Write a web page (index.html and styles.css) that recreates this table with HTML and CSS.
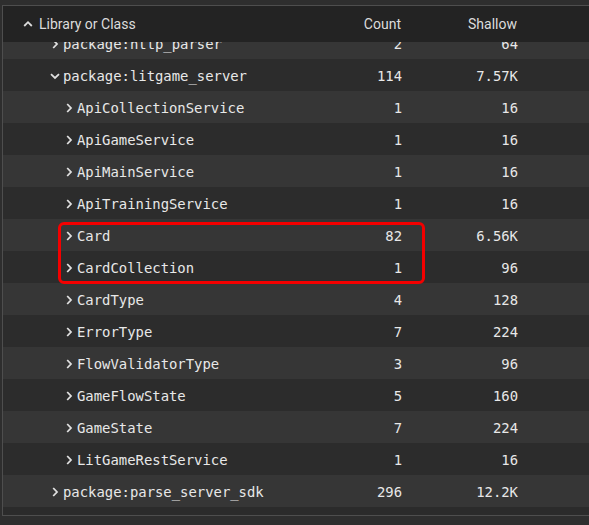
FILE: index.html
```html
<!DOCTYPE html>
<html>
<head>
<meta charset="utf-8">
<link rel="stylesheet" href="styles.css">
</head>
<body>
<div class="panel">
  <div class="head">
    <div class="hname">
      <svg class="sort" viewBox="0 0 10 10" width="10" height="10"><path d="M1.2 7 L5 3.2 L8.8 7" /></svg>
      <span>Library or Class</span>
    </div>
    <div class="num">Count</div>
    <div class="num">Shallow</div>
  </div>
  <div class="viewport">
    <div class="rows">
      <div class="row light l1"><div class="name"><svg class="chev" viewBox="0 0 10 10"><path d="M3.2 1 L7 5 L3.2 9"/></svg><span>package:http_parser</span></div><div class="num">2</div><div class="num">64</div></div>
      <div class="row dark l1"><div class="name"><svg class="chev" viewBox="0 0 10 10"><path d="M1 3.2 L5 7 L9 3.2"/></svg><span>package:litgame_server</span></div><div class="num">114</div><div class="num">7.57K</div></div>
      <div class="row light l2"><div class="name"><svg class="chev" viewBox="0 0 10 10"><path d="M3.2 1 L7 5 L3.2 9"/></svg><span>ApiCollectionService</span></div><div class="num">1</div><div class="num">16</div></div>
      <div class="row dark l2"><div class="name"><svg class="chev" viewBox="0 0 10 10"><path d="M3.2 1 L7 5 L3.2 9"/></svg><span>ApiGameService</span></div><div class="num">1</div><div class="num">16</div></div>
      <div class="row light l2"><div class="name"><svg class="chev" viewBox="0 0 10 10"><path d="M3.2 1 L7 5 L3.2 9"/></svg><span>ApiMainService</span></div><div class="num">1</div><div class="num">16</div></div>
      <div class="row dark l2"><div class="name"><svg class="chev" viewBox="0 0 10 10"><path d="M3.2 1 L7 5 L3.2 9"/></svg><span>ApiTrainingService</span></div><div class="num">1</div><div class="num">16</div></div>
      <div class="highlight">
        <div class="row light l2"><div class="name"><svg class="chev" viewBox="0 0 10 10"><path d="M3.2 1 L7 5 L3.2 9"/></svg><span>Card</span></div><div class="num">82</div><div class="num">6.56K</div></div>
        <div class="row dark l2"><div class="name"><svg class="chev" viewBox="0 0 10 10"><path d="M3.2 1 L7 5 L3.2 9"/></svg><span>CardCollection</span></div><div class="num">1</div><div class="num">96</div></div>
      </div>
      <div class="row light l2"><div class="name"><svg class="chev" viewBox="0 0 10 10"><path d="M3.2 1 L7 5 L3.2 9"/></svg><span>CardType</span></div><div class="num">4</div><div class="num">128</div></div>
      <div class="row dark l2"><div class="name"><svg class="chev" viewBox="0 0 10 10"><path d="M3.2 1 L7 5 L3.2 9"/></svg><span>ErrorType</span></div><div class="num">7</div><div class="num">224</div></div>
      <div class="row light l2"><div class="name"><svg class="chev" viewBox="0 0 10 10"><path d="M3.2 1 L7 5 L3.2 9"/></svg><span>FlowValidatorType</span></div><div class="num">3</div><div class="num">96</div></div>
      <div class="row dark l2"><div class="name"><svg class="chev" viewBox="0 0 10 10"><path d="M3.2 1 L7 5 L3.2 9"/></svg><span>GameFlowState</span></div><div class="num">5</div><div class="num">160</div></div>
      <div class="row light l2"><div class="name"><svg class="chev" viewBox="0 0 10 10"><path d="M3.2 1 L7 5 L3.2 9"/></svg><span>GameState</span></div><div class="num">7</div><div class="num">224</div></div>
      <div class="row dark l2"><div class="name"><svg class="chev" viewBox="0 0 10 10"><path d="M3.2 1 L7 5 L3.2 9"/></svg><span>LitGameRestService</span></div><div class="num">1</div><div class="num">16</div></div>
      <div class="row light l1"><div class="name"><svg class="chev" viewBox="0 0 10 10"><path d="M3.2 1 L7 5 L3.2 9"/></svg><span>package:parse_server_sdk</span></div><div class="num">296</div><div class="num">12.2K</div></div>
    </div>
  </div>
</div>
</body>
</html>
```
FILE: styles.css
```css
html, body {
  margin: 0;
  padding: 0;
  background: #2e2e2e;
  overflow: hidden;
}
body {
  width: 589px;
  height: 525px;
}
.panel {
  margin-top: 5px;
  margin-left: 2px;
  border: 1px solid #4e4e4e;
  border-right: none;
  background: #2b2b2b;
}
.head, .row {
  display: grid;
  grid-template-columns: 1fr 100px 116px;
  padding-right: 71px;
  align-items: center;
  box-sizing: border-box;
}
.head {
  height: 36px;
  background: #232323;
  font-family: Roboto, "Liberation Sans", sans-serif;
  font-size: 14px;
  color: #dcdcdc;
  position: relative;
  z-index: 1;
  padding-right: 72px;
}
.hname {
  display: flex;
  align-items: center;
  padding-left: 20px;
}
.sort {
  width: 10px;
  height: 10px;
  margin-right: 6px;
  fill: none;
  stroke: #dcdcdc;
  stroke-width: 1.8;
}
.num {
  text-align: right;
}
.viewport {
  height: 473px;
  overflow: hidden;
}
.rows {
  margin-top: -15px;
}
.row {
  height: 32px;
  padding-top: 2px;
  font-family: "DejaVu Sans Mono", "Liberation Mono", monospace;
  font-size: 13.9px;
  color: #e8e8e8;
}
.light { background: #363636; }
.dark { background: #2c2c2c; }
.name {
  display: flex;
  align-items: center;
  white-space: nowrap;
}
.l1 .name { padding-left: 47px; }
.l2 .name { padding-left: 61px; }
.chev {
  width: 10px;
  height: 10px;
  margin-right: 3px;
  fill: none;
  stroke: #e0e0e0;
  stroke-width: 1.8;
}
.highlight {
  position: relative;
}
.highlight::after {
  content: "";
  position: absolute;
  left: 55px;
  top: 3px;
  width: 361px;
  height: 56px;
  border: 3px solid #f40000;
  border-radius: 6px;
  pointer-events: none;
}
```
